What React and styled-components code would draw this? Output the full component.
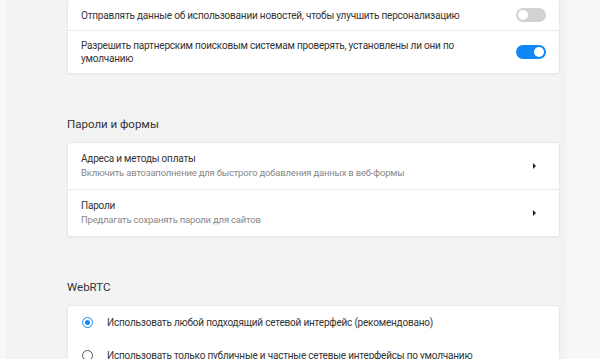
import React from 'react'
import styled, { createGlobalStyle } from 'styled-components'

const GlobalStyle = createGlobalStyle`
    html, body {
        margin: 0;
        padding: 0;
        height: 100%;
        overflow: hidden;
        background: #f8f8f8;
    }
    body {
        font-family: Roboto, 'Noto Sans', sans-serif;
        color: #333;
    }
`;

const Page = styled.div`
    display: flex;
    height: 359px;
    overflow: hidden;
`;

const Column = styled.div`
    margin-left: 6px;
    width: 561px;
    background: #f3f3f3;
    padding: 0 7px 0 61px;
    box-sizing: border-box;
`;

const Scroll = styled.div`
    margin-top: -1px;
`;

const Card = styled.div`
    background: #fff;
    border: 1px solid #e8e8e8;
    border-radius: 3px;
    box-shadow: 0 1px 2px rgba(0,0,0,0.04);
    margin-bottom: 40px;
`;

const Row = styled.div`
    display: flex;
    align-items: center;
    gap: 12px;
    padding: ${p => p.$pad || '9px'} 13px;
    border-top: ${p => (p.$first ? 'none' : '1px solid #ececec')};
`;

const RowText = styled.div`
    flex: 1;
    font-size: 10px;
    letter-spacing: -0.2px;
    line-height: 13px;
    color: #333;
`;

const Title = styled.div`
    font-size: 10px;
    letter-spacing: -0.2px;
    line-height: 14px;
    color: #333;
`;

const Sub = styled.div`
    font-size: 9.5px;
    letter-spacing: -0.2px;
    line-height: 14px;
    color: #888;
`;

const Heading = styled.h2`
    margin: 0;
    font-weight: 400;
    font-size: 11.5px;
    line-height: 16px;
    color: #333;
    padding-top: 2px;
    margin-bottom: 10px;
`;

const Toggle = styled.div`
    flex: 0 0 auto;
    position: relative;
    width: 30px;
    height: 14px;
    border-radius: 7px;
    background: ${p => (p.$on ? '#0f87f5' : '#d2d2d2')};

    &::after {
        content: '';
        position: absolute;
        top: 2px;
        left: ${p => (p.$on ? '18px' : '2px')};
        width: 10px;
        height: 10px;
        border-radius: 50%;
        background: #fff;
    }
`;

const Arrow = styled.div`
    flex: 0 0 auto;
    width: 0;
    height: 0;
    margin-right: 10px;
    border-top: 3px solid transparent;
    border-bottom: 3px solid transparent;
    border-left: 3px solid #222;
`;

const Radio = styled.div`
    flex: 0 0 auto;
    box-sizing: border-box;
    width: 11px;
    height: 11px;
    margin-left: 1px;
    margin-right: 2px;
    border-radius: 50%;
    border: 1.5px solid ${p => (p.$checked ? '#1a88f0' : '#555')};
    display: flex;
    align-items: center;
    justify-content: center;

    &::after {
        content: '';
        display: ${p => (p.$checked ? 'block' : 'none')};
        width: 5px;
        height: 5px;
        border-radius: 50%;
        background: #1a88f0;
    }
`;

const LinkText = styled.div`
    flex: 1;
`;

const ToggleRow = ({ text, on, first }) => (
    <Row $first={first} $pad="8px">
        <RowText>{text}</RowText>
        <Toggle $on={on} />
    </Row>
)

const LinkRow = ({ title, sub, first }) => (
    <Row $first={first}>
        <LinkText>
            <Title>{title}</Title>
            <Sub>{sub}</Sub>
        </LinkText>
        <Arrow />
    </Row>
)

const RadioRow = ({ text, checked }) => (
    <Row $first $pad="10px">
        <Radio $checked={checked} />
        <RowText>{text}</RowText>
    </Row>
)

export default function App() {
    return (
        <>
            <GlobalStyle />
            <Page>
                <Column>
                    <Scroll>
                        <Card>
                            <ToggleRow first text="Отправлять данные об использовании новостей, чтобы улучшить персонализацию" />
                            <ToggleRow on text="Разрешить партнерским поисковым системам проверять, установлены ли они по умолчанию" />
                        </Card>

                        <Heading>Пароли и формы</Heading>
                        <Card>
                            <LinkRow first title="Адреса и методы оплаты" sub="Включить автозаполнение для быстрого добавления данных в веб-формы" />
                            <LinkRow title="Пароли" sub="Предлагать сохранять пароли для сайтов" />
                        </Card>

                        <Heading>WebRTC</Heading>
                        <Card>
                            <RadioRow checked text="Использовать любой подходящий сетевой интерфейс (рекомендовано)" />
                            <RadioRow text="Использовать только публичные и частные сетевые интерфейсы по умолчанию" />
                        </Card>
                    </Scroll>
                </Column>
            </Page>
        </>
    )
}
